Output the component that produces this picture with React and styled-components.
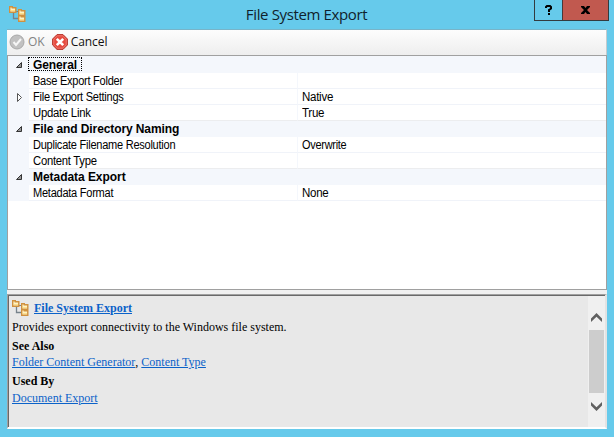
import React from "react";
import styled, { createGlobalStyle } from "styled-components";

const Global = createGlobalStyle`
  * { box-sizing: border-box; }
  html, body { margin: 0; background: #66caeb; overflow: hidden; }
`;

const Window = styled.div`
  width: 614px;
  height: 437px;
  padding: 0 7px 8px;
  display: flex;
  flex-direction: column;
  background: #66caeb;
  font-family: "Liberation Sans", sans-serif;
  color: #000;
`;

const TitleBar = styled.header`
  height: 29px;
  flex: none;
  display: grid;
  grid-template-columns: 73px 1fr 75px;
  align-items: start;
  margin-right: -2px;
`;

const TitleIcon = styled.span`
  display: flex;
  padding: 6px 0 0 2px;
`;

const Title = styled.h1`
  margin: 0;
  padding: 4px 1px 0 0;
  text-align: center;
  font: 400 15px/20px "Open Sans", sans-serif;
  letter-spacing: -0.37px;
  color: #10222c;
`;

const Controls = styled.div`
  display: flex;
  height: 21px;
  width: 75px;
  border: 1px solid #333b3f;
  border-top: 0;
`;

const ControlButton = styled.button`
  width: ${(p) => p.$width}px;
  padding: 0 0 1px;
  border: 0;
  border-left: ${(p) => (p.$danger ? "1px solid #4a3838" : "0")};
  background: ${(p) => (p.$danger ? "#c1594f" : "#66caeb")};
  display: flex;
  align-items: center;
  justify-content: center;
`;

const Client = styled.main`
  flex: 1;
  min-height: 0;
  display: flex;
  flex-direction: column;
  background: #f0f0f0;
`;

const Toolbar = styled.div`
  height: 26px;
  flex: none;
  display: flex;
  align-items: center;
  padding: 0 0 1px 2px;
  border-top: 1px solid #78b4c8;
  border-right: 1px solid #c4cbce;
  background: linear-gradient(#fdfdfd, #eeeeee);
`;

const ToolButton = styled.button`
  display: flex;
  align-items: center;
  gap: 3px;
  padding: 0;
  margin-right: 7px;
  border: 0;
  background: none;
  font: 12px/16px "Open Sans", sans-serif;
  letter-spacing: ${(p) => p.$track || 0}px;
  color: ${(p) => (p.$muted ? "#838383" : "#111")};
`;

const Grid = styled.section`
  height: 235px;
  flex: none;
  border: 1px solid #a0a0a0;
  background: #fff;
  padding-top: 1px;
  box-shadow: inset 0 1px #f4f7fc;
`;

const Row = styled.div`
  height: 16px;
  display: grid;
  grid-template-columns: 21px ${(p) => (p.$category ? "1fr" : "269px 1fr")};
  background: #f4f7fc;
`;

const Gutter = styled.span`
  display: flex;
  padding: 3px 0 0 7px;
`;

const Cell = styled.span`
  padding-left: 4px;
  border-bottom: 1px solid ${(p) => (p.$last ? "#ecedef" : "#f0f3f9")};
  border-right: ${(p) => (p.$value ? "0" : "1px solid #f4f7fc")};
  background: #fff;
`;

const CellText = styled.span`
  display: block;
  width: max-content;
  font-size: 12px;
  line-height: 17px;
  height: 15px;
  white-space: nowrap;
  letter-spacing: -0.28px;
  transform: scaleX(${(p) => p.$narrow || 0.92});
  transform-origin: 0 0;
`;

const Category = styled.span`
  padding-left: 4px;
  font-size: 12px;
  font-weight: 700;
  line-height: 17px;
  height: 16px;
  white-space: nowrap;
  letter-spacing: ${(p) => p.$track}px;
`;

const Focus = styled.span`
  display: block;
  height: 14px;
  width: 54px;
  margin-left: -5px;
  padding-left: 4px;
  line-height: 15px;
  border: 1px dotted #000;
`;

const Info = styled.section`
  flex: 1;
  min-height: 0;
  margin-top: 4px;
  display: flex;
  border: 2px solid;
  border-color: #a0a0a0 #e3e3e3 #fff #a0a0a0;
  box-shadow: inset 1px 1px #696969;
  border-width: 1px 2px 2px 1px;
  background: #e8e8e8;
`;

const InfoBody = styled.div`
  flex: 1;
  padding: 5px 0 0 4px;
  font: 12px/16px "Liberation Serif", serif;
`;

const InfoLine = styled.div`
  height: ${(p) => p.$height}px;
  display: flex;
  align-items: flex-start;
  white-space: pre;
  font-weight: ${(p) => (p.$bold ? 700 : 400)};
`;

const InfoIcon = styled.span`
  display: flex;
`;

const Link = styled.a`
  color: #0b62c9;
  text-decoration: underline;
  text-underline-offset: 1px;
  margin-left: ${(p) => p.$gap || 0}px;
`;

const Scrollbar = styled.div`
  width: 17px;
  flex: none;
  margin-top: 1px;
  padding-top: 17px;
  display: flex;
  flex-direction: column;
  align-items: center;
  background: #f0f0f0;
`;

const Thumb = styled.div`
  width: 15px;
  height: 63px;
  flex: none;
  margin: 8px 0 9px;
  background: #cdcdcd;
`;

function FolderTree() {
  const folder = (x, y) => (
    <g transform={`translate(${x} ${y})`}>
      <path d="M.7 .7h2.600v1h3.500v4.600H.7z" fill="#fff3c4" stroke="#d0913f" strokeWidth="1.400" />
      <path d="M2 4.500h4" stroke="#ffe08a" />
    </g>
  );
  return (
    <svg width="17" height="17" viewBox="0 0 17 17">
      <path d="M4.500 7v5.500H9M4.500 7.500" fill="none" stroke="#77838c" strokeWidth="1.300" />
      <path d="M7 5.500h2" stroke="#77838c" />
      {folder(0, 0)}
      {folder(9, 3)}
      {folder(9, 9)}
    </svg>
  );
}

function OkIcon() {
  return (
    <svg width="16" height="16" viewBox="0 0 16 16">
      <circle cx="8" cy="8" r="7" fill="#c1c1c1" stroke="#a9a9a9" />
      <path d="m4.500 8 2.500 3 5-6" fill="none" stroke="#f6f6f6" strokeWidth="2" />
    </svg>
  );
}

function CancelIcon() {
  return (
    <svg width="16" height="16" viewBox="0 0 16 16">
      <path d="M5 .6h6L15.400 5v6L11 15.400H5L.6 11V5z" fill="#e64b3f" stroke="#b5352b" />
      <path d="M5.300 1.800h5.400L14.200 5.200v5.500L10.700 14.200H5.300L1.800 10.700V5.200z" fill="none" stroke="#f0827a" strokeWidth=".7" />
      <path d="m4.800 4.800 6.400 6.400m0-6.400-6.400 6.400" stroke="#fff" strokeWidth="2.600" />
    </svg>
  );
}

function Expander({ open }) {
  return (
    <svg width="9" height="11" viewBox="0 0 9 11">
      {open ? (
        <path d="M6.500 2.500v5h-5z" fill="#999" stroke="#333" />
      ) : (
        <path d="M2.500 1.500v8l4-4z" fill="#fff" stroke="#555" />
      )}
    </svg>
  );
}

function Chevron({ down }) {
  return (
    <svg width="11" height="9" viewBox="0 0 11 9">
      <path
        d={down ? "M0 0l5.500 5.300L11 0v3.400L5.500 9 0 3.400z" : "M0 9l5.500-5.300L11 9V5.600L5.500 0 0 5.600z"}
        fill="#606060"
      />
    </svg>
  );
}

const rows = [
  { category: "General", focused: true, track: -0.1 },
  { name: "Base Export Folder" },
  { name: "File Export Settings", value: "Native", nested: true },
  { name: "Update Link", value: "True", last: true, narrow: 0.945 },
  { category: "File and Directory Naming", track: -0.1 },
  { name: "Duplicate Filename Resolution", value: "Overwrite", valueNarrow: 0.91 },
  { name: "Content Type", last: true, narrow: 0.94 },
  { category: "Metadata Export", track: -0.05 },
  { name: "Metadata Format", value: "None" },
];

function PropertyRow({ row }) {
  if (row.category) {
    return (
      <Row $category>
        <Gutter><Expander open /></Gutter>
        <Category $track={row.track}>
          {row.focused ? <Focus>{row.category}</Focus> : row.category}
        </Category>
      </Row>
    );
  }
  return (
    <Row>
      <Gutter>{row.nested && <Expander />}</Gutter>
      <Cell $last={row.last}>
        <CellText $narrow={row.narrow}>{row.name}</CellText>
      </Cell>
      <Cell $value $last={row.last}>
        {row.value && <CellText $narrow={row.valueNarrow || 0.96}>{row.value}</CellText>}
      </Cell>
    </Row>
  );
}

export default function App() {
  return (
    <>
      <Global />
      <Window>
        <TitleBar>
          <TitleIcon><FolderTree /></TitleIcon>
          <Title>File System Export</Title>
          <Controls>
            <ControlButton $width={27} aria-label="Help">
              <svg width="8" height="10" viewBox="0 0 8 10">
                <path d="M1 3V2l1-1h3l1 1v1.500L4 5v2" fill="none" stroke="#000" strokeWidth="2" />
                <path d="M3 8h2v2H3z" />
              </svg>
            </ControlButton>
            <ControlButton $danger $width={46} aria-label="Close">
              <svg width="9" height="8" viewBox="0 0 9 8">
                <path d="M0 0h3l1.500 2L6 0h3v1L6 4l3 3v1H6L4.500 6 3 8H0V7l3-3-3-3z" />
              </svg>
            </ControlButton>
          </Controls>
        </TitleBar>
        <Client>
          <Toolbar>
            <ToolButton $muted><OkIcon />OK</ToolButton>
            <ToolButton $track={-0.05}><CancelIcon />Cancel</ToolButton>
          </Toolbar>
          <Grid>
            {rows.map((row) => <PropertyRow key={row.category || row.name} row={row} />)}
          </Grid>
          <Info>
            <InfoBody>
              <InfoLine $height={19} $bold>
                <InfoIcon><FolderTree /></InfoIcon>
                <Link $gap={5}>File System Export</Link>
              </InfoLine>
              <InfoLine $height={19}>Provides export connectivity to the Windows file system.</InfoLine>
              <InfoLine $height={16} $bold>See Also</InfoLine>
              <InfoLine $height={19}><Link>Folder Content Generator</Link>, <Link>Content Type</Link></InfoLine>
              <InfoLine $height={17} $bold>Used By</InfoLine>
              <InfoLine $height={16}><Link>Document Export</Link></InfoLine>
            </InfoBody>
            <Scrollbar>
              <Chevron />
              <Thumb />
              <Chevron down />
            </Scrollbar>
          </Info>
        </Client>
      </Window>
    </>
  );
}
